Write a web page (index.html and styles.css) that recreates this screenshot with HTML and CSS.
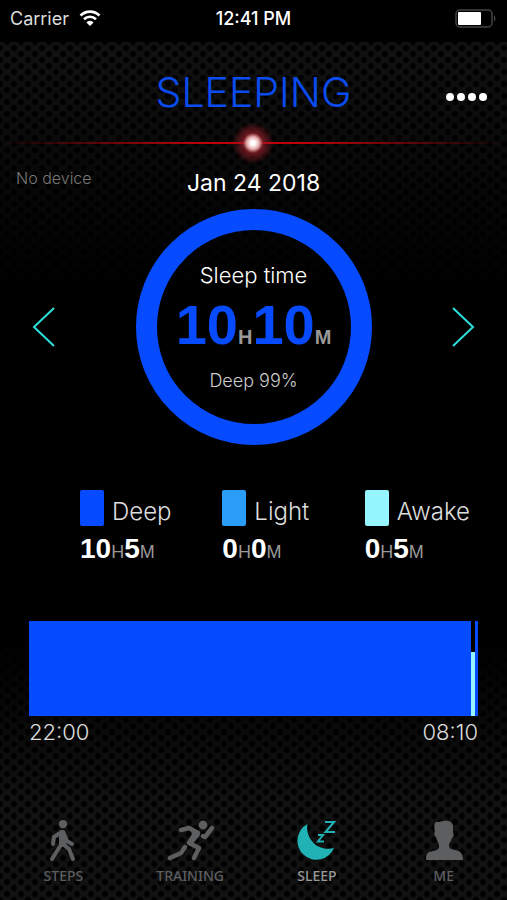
FILE: index.html
```
<!DOCTYPE html>
<html lang="en">
<head>
  <meta charset="UTF-8">
  <meta name="viewport" content="width=device-width, initial-scale=1.0">
  <title>Sleeping</title>
  <link rel="stylesheet" href="styles.css">
</head>
<body>
  <div class="status">
    <div class="carrier">
      <span>Carrier</span>
      <svg class="wifi" viewBox="0 0 22 16" aria-hidden="true">
        <path d="M1.5 5.5a13.5 13.5 0 0 1 19 0M5 9.2a8.6 8.6 0 0 1 12 0" fill="none" stroke="#fff" stroke-width="2.6"/>
        <path d="M11 16l-3.6-3.6a5 5 0 0 1 7.2 0z" fill="#fff"/>
      </svg>
    </div>
    <span class="clock">12:41 PM</span>
    <svg class="battery" viewBox="0 0 42 19" aria-hidden="true">
      <rect x="1" y="1" width="36" height="17" rx="4" fill="none" stroke="#444" stroke-width="1.5"/>
      <rect x="3" y="3" width="23" height="13" rx="1" fill="#fff"/>
      <path d="M39 6q3 3.500 0 7z" fill="#444"/>
    </svg>
  </div>
  <header class="header">
    <h1>SLEEPING</h1>
    <button class="more" type="button" aria-label="More"><i></i><i></i><i></i><i></i></button>
  </header>
  <div class="flare"><i></i></div>
  <div class="info">
    <span class="device">No device</span>
    <h2 class="date">Jan 24 2018</h2>
  </div>
  <main>
    <section class="day">
      <button class="arrow" type="button" aria-label="Previous day">
        <svg viewBox="0 0 24 40"><path d="M22 1L2 20l20 19"/></svg>
      </button>
      <div class="ring">
        <p class="ring-title">Sleep time</p>
        <p class="total">10<small>H</small>10<small>M</small></p>
        <p class="percent">Deep 99%</p>
      </div>
      <button class="arrow" type="button" aria-label="Next day">
        <svg viewBox="0 0 24 40"><path d="M2 1l20 19L2 39"/></svg>
      </button>
    </section>
    <ul class="stages">
      <li>
        <div class="stage"><i class="deep"></i>Deep</div>
        <p class="time">10<small>H</small>5<small>M</small></p>
      </li>
      <li>
        <div class="stage"><i class="light"></i>Light</div>
        <p class="time">0<small>H</small>0<small>M</small></p>
      </li>
      <li>
        <div class="stage"><i class="awake"></i>Awake</div>
        <p class="time">0<small>H</small>5<small>M</small></p>
      </li>
    </ul>
    <section class="chart">
      <div class="bars">
        <i class="deep" style="width: 98.4%"></i>
        <i class="awake" style="width: 0.9%"></i>
        <i class="deep" style="width: 0.7%"></i>
      </div>
      <div class="hours"><span>22:00</span><span>08:10</span></div>
    </section>
  </main>
  <nav class="tabs">
    <a href="#">
      <svg viewBox="0 0 44 44" aria-hidden="true">
        <circle cx="22" cy="4" r="4.200" fill="currentColor"/>
        <path d="M20 12.500l-7 4.500-1 7M24 16l2 5 5 3M20.500 24L11 39M22 24l6 5 4 10" fill="none" stroke="currentColor" stroke-width="4" stroke-linecap="round" stroke-linejoin="round"/>
        <path d="M18 11q4-2 6 0l2 5-1 11h-7z" fill="currentColor"/>
      </svg>
      <span>STEPS</span>
    </a>
    <a href="#">
      <svg class="wide" viewBox="0 0 50 44" aria-hidden="true">
        <circle cx="38" cy="5" r="4.400" fill="currentColor"/>
        <path d="M16 10l8-2 9 5-9 10 10 5-5 10M20 27l-4 6-11 5M38 16l2 1 7-9" fill="none" stroke="currentColor" stroke-width="4.500" stroke-linecap="round" stroke-linejoin="round"/>
        <path d="M24 7l8 4 3 4-8 10-5-3 5-8z" fill="currentColor"/>
      </svg>
      <span>TRAINING</span>
    </a>
    <a href="#" class="current">
      <svg viewBox="0 0 44 44" aria-hidden="true">
        <path d="M12.500 4A21 21 0 0 0 39 28 19 19 0 1 1 12.500 4z" fill="currentColor"/>
        <path d="M30 2h9l-8.500 10H40M23 15h5l-5 6.500h6" fill="none" stroke="currentColor" stroke-width="2"/>
      </svg>
      <span>SLEEP</span>
    </a>
    <a href="#">
      <svg viewBox="0 0 44 44" aria-hidden="true">
        <path d="M14 2l3 0 4-1c6-1 11 1 10 8l0 4c1 0 1 4-1 5-1 4-3 5-3 7 0 4 2 4 6 5 5 1 8 3 8 10H4c0-7 2-8 7-9 5-1 6-2 6-5 0-3-2-5-3-9-2-1-2-5-1-5-1-5-1-8 1-10z" fill="currentColor"/>
      </svg>
      <span>ME</span>
    </a>
  </nav>
</body>
</html>
```
FILE: styles.css
```
* {
  margin: 0;
  padding: 0;
  box-sizing: border-box;
}
body {
  display: flex;
  flex-direction: column;
  min-height: 100vh;
  color: #fff;
  font-family: Inter, "Liberation Sans", sans-serif;
  background-color: #000;
  background-image:
    linear-gradient(rgba(0,0,0,0) 42px, #000 290px, #000 640px, rgba(0,0,0,0) 800px),
    radial-gradient(circle, #000 2px, rgba(0,0,0,0) 4px),
    radial-gradient(circle, #000 2px, rgba(0,0,0,0) 4px),
    linear-gradient(#121212, #121212);
  background-size: auto, 14px 12px, 14px 12px, auto;
  background-position: 0 0, 0 0, 7px 6px, 0 0;
}
button {
  border: 0;
  background: none;
  cursor: pointer;
}
.status {
  display: grid;
  grid-template-columns: 1fr auto 1fr;
  align-items: center;
  height: 42px;
  padding: 0 10px 6px;
  font-size: 18px;
  background: #000;
}
.carrier {
  display: flex;
  align-items: center;
  gap: 10px;
  color: #ddd;
}
.wifi {
  width: 22px;
  height: 16px;
}
.clock {
  font-weight: 500;
}
.battery {
  width: 42px;
  height: 19px;
  justify-self: end;
}
.header {
  display: grid;
  grid-template-columns: 1fr auto 1fr;
  align-items: center;
  height: 100px;
  padding: 0 20px;
}
.header h1 {
  grid-column: 2;
  font-size: 41px;
  font-weight: 300;
  color: #0a4cf0;
}
.more {
  display: flex;
  gap: 3px;
  justify-self: end;
  padding: 18px 0 8px;
}
.more i {
  width: 8px;
  height: 8px;
  border-radius: 50%;
  background: #fff;
}
.flare {
  position: relative;
  height: 2px;
  background: linear-gradient(90deg, rgba(190,0,10,0), #be000a 40%, #be000a 60%, rgba(190,0,10,0));
}
.flare i {
  position: absolute;
  top: -21px;
  left: 50%;
  width: 44px;
  height: 44px;
  margin-left: -23px;
  background: radial-gradient(circle, #fff 2px, #e8b0b0 6px, rgba(150,30,40,0.7) 10px, rgba(100,0,10,0) 21px);
}
.info {
  display: grid;
  grid-template-columns: 1fr auto 1fr;
  padding: 24px 16px 0;
}
.device {
  font-size: 16px;
  font-weight: 300;
  color: #777;
}
.date {
  font-size: 23px;
  line-height: 30px;
  font-weight: 400;
}
.day {
  display: flex;
  align-items: center;
  justify-content: space-between;
  padding: 11px 32px 0;
}
.arrow svg {
  display: block;
  width: 24px;
  height: 40px;
  fill: none;
  stroke: #2de0dc;
  stroke-width: 2;
}
.ring {
  width: 236px;
  height: 236px;
  padding-top: 31px;
  border: 21px solid #064bff;
  border-radius: 50%;
  text-align: center;
}
.ring-title {
  font-size: 22px;
  line-height: 28px;
  font-weight: 300;
}
.total {
  margin-top: 6px;
  font: bold 56px/60px "Liberation Sans", sans-serif;
  color: #064bff;
}
.total small {
  font-size: 20px;
  color: #999;
}
.percent {
  margin-top: 4px;
  font-size: 18px;
  line-height: 20px;
  font-weight: 300;
  color: #ccc;
}
.stages {
  display: grid;
  grid-template-columns: repeat(3, 1fr);
  padding: 45px 0 0 80px;
  list-style: none;
}
.stage {
  display: flex;
  gap: 8px;
  font-size: 24px;
  line-height: 43px;
  font-weight: 300;
  color: #ddd;
}
.stage i {
  width: 24px;
  height: 36px;
  border-radius: 2px;
}
.deep {
  background: #064bff;
}
.light {
  background: #2a9df8;
}
.awake {
  background: #96f6ff;
}
.time {
  font: bold 28px/32px "Liberation Sans", sans-serif;
}
.time small {
  font-size: 18px;
  font-weight: 400;
  color: #999;
}
.chart {
  padding: 53px 29px 0;
}
.bars {
  display: flex;
  align-items: flex-end;
  height: 95px;
}
.bars .deep {
  height: 100%;
}
.bars .awake {
  height: 67%;
}
.hours {
  display: flex;
  justify-content: space-between;
  font-size: 22px;
  line-height: 32px;
  font-weight: 300;
  color: #ddd;
}
.tabs {
  display: grid;
  grid-template-columns: repeat(4, 1fr);
  margin-top: auto;
  padding-bottom: 14px;
}
.tabs a {
  display: flex;
  flex-direction: column;
  align-items: center;
  gap: 2px;
  color: #5c5e60;
  font-family: "Noto Sans", sans-serif;
  font-size: 14px;
  line-height: 20px;
  font-weight: 500;
  text-decoration: none;
}
.tabs svg {
  width: 44px;
  height: 44px;
}
.tabs .wide {
  width: 50px;
}
.tabs .current {
  color: #20b2b4;
}
.tabs .current span {
  color: #999;
}
```
